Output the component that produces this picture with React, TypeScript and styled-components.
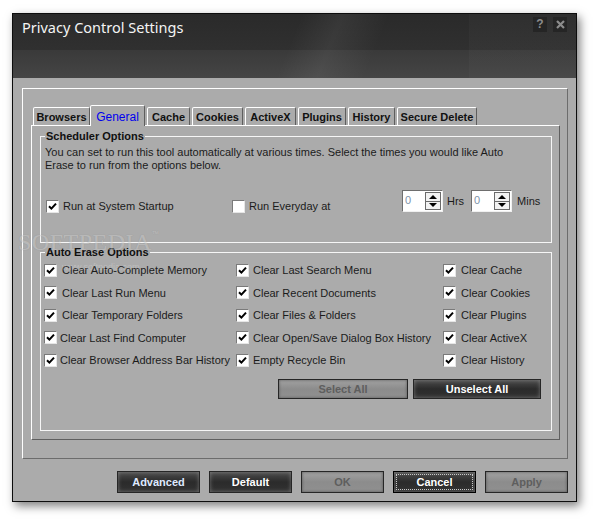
import styled, { createGlobalStyle } from "styled-components";

const GlobalStyle = createGlobalStyle`
  html, body {
    margin: 0;
    padding: 0;
    background: #ffffff;
  }
  body {
    font-family: "Liberation Sans", Arial, sans-serif;
    font-size: 11px;
    color: #1b1b1b;
  }
  * {
    box-sizing: border-box;
  }
`;

const Page = styled.div`
  position: relative;
  width: 596px;
  height: 522px;
  padding: 13px 0 0 12px;
  overflow: hidden;
`;

const Window = styled.div`
  width: 565px;
  height: 489px;
  border: 1px solid #0d0d0d;
  background: #ababab;
  box-shadow: 3px 4px 9px rgba(0, 0, 0, 0.5);
  display: flex;
  flex-direction: column;
`;

const TitleBar = styled.div`
  flex: none;
  height: 64px;
  display: flex;
  align-items: flex-start;
  justify-content: space-between;
  padding: 3px 9px 0 9px;
  background:
    linear-gradient(90deg, transparent 0 81%, rgba(255, 255, 255, 0.025) 81% 100%),
    linear-gradient(112deg, transparent 0 49%, rgba(255, 255, 255, 0.06) 56%, transparent 64%),
    linear-gradient(180deg, #2a2a2a 0, #303030 56%, #3a3a3a 57%, #454545 100%);
`;

const Title = styled.div`
  font-family: "Noto Sans", "Liberation Sans", sans-serif;
  font-size: 14.5px;
  line-height: 20px;
  color: #f4f4f4;
`;

const TitleButtons = styled.div`
  display: flex;
  gap: 6px;
`;

const TitleButton = styled.div`
  width: 14px;
  height: 15px;
  background: #252525;
  color: #8c8c8c;
  font-weight: bold;
  font-size: 12px;
  line-height: 15px;
  text-align: center;
  display: flex;
  align-items: center;
  justify-content: center;
`;

const Body = styled.div`
  flex: 1;
  display: flex;
  flex-direction: column;
  padding: 10px 8px 8px 9px;
`;

const Panel = styled.div`
  flex: 1;
  display: flex;
  flex-direction: column;
  border: 1px solid;
  border-color: #ffffff #6c6c6c #6c6c6c #ffffff;
  padding: 16px 7px 18px 8px;
`;

const TabStrip = styled.div`
  position: relative;
  z-index: 1;
  height: 20px;
  display: flex;
  align-items: flex-end;
  padding-left: 2px;
`;

const Tab = styled.div<{ $w: number; $gap: number; $active?: boolean }>`
  width: ${(p) => p.$w}px;
  margin-left: ${(p) => p.$gap}px;
  height: ${(p) => (p.$active ? 21 : 18)}px;
  margin-bottom: ${(p) => (p.$active ? -1 : 0)}px;
  border: 1px solid;
  border-bottom: 0;
  border-color: #ffffff #5e5e5e transparent #ffffff;
  border-radius: 2px 2px 0 0;
  background: #ababab;
  display: flex;
  align-items: center;
  justify-content: center;
  font-weight: ${(p) => (p.$active ? "normal" : "bold")};
  font-size: ${(p) => (p.$active ? 12 : 11)}px;
  color: ${(p) => (p.$active ? "#0000ee" : "#111111")};
  padding-top: ${(p) => (p.$active ? 1 : 0)}px;
`;

const TabPanel = styled.div`
  flex: 1;
  display: flex;
  flex-direction: column;
  border: 1px solid;
  border-color: #ffffff #5f5f5f #5f5f5f #ffffff;
  padding: 4px 7px 0 8px;
`;

const Group = styled.fieldset<{ $h: number; $top?: number }>`
  height: ${(p) => p.$h}px;
  margin: ${(p) => p.$top ?? 0}px 0 0 0;
  padding: 0 4px 0 3px;
  border: 1px solid #f6f6f6;
  min-width: 0;
`;

const Legend = styled.legend`
  padding: 0 1px;
  margin-left: 1px;
  font-weight: bold;
  font-size: 11px;
  line-height: 13px;
  color: #111111;
`;

const Description = styled.p`
  margin: 3px 0 0 1px;
  line-height: 13px;
`;

const ScheduleRow = styled.div`
  margin-top: 19px;
  height: 22px;
  display: flex;
  align-items: flex-end;
  padding-left: 2px;
`;

const CheckItem = styled.label<{ $w?: number; $gap?: number }>`
  display: flex;
  align-items: center;
  gap: ${(p) => p.$gap ?? 5}px;
  width: ${(p) => (p.$w ? `${p.$w}px` : "auto")};
  height: 14px;
  white-space: nowrap;
`;

const Box = styled.span`
  flex: none;
  width: 13px;
  height: 13px;
  background: #ffffff;
  border: 1px solid;
  border-color: #7a7a7a #e6e6e6 #e6e6e6 #7a7a7a;
  display: flex;
  align-items: center;
  justify-content: center;
`;

const TimeGroup = styled.div`
  display: flex;
  align-items: center;
  height: 22px;
  margin-bottom: 1px;
`;

const Spinner = styled.div`
  width: 41px;
  height: 22px;
  display: flex;
  background: #ffffff;
  border: 1px solid;
  border-color: #6e6e6e #f0f0f0 #f0f0f0 #6e6e6e;
`;

const SpinValue = styled.span`
  flex: 1;
  padding-left: 2px;
  line-height: 18px;
  color: #8092aa;
`;

const SpinButtons = styled.div`
  width: 16px;
  margin: 1px 1px 1px 0;
  display: flex;
  flex-direction: column;
  border: 1px solid #6a6a6a;
`;

const SpinHalf = styled.div<{ $down?: boolean }>`
  flex: 1;
  display: flex;
  align-items: center;
  justify-content: center;
  background: #f2f2f2;
  border-top: ${(p) => (p.$down ? "1px solid #6a6a6a" : "0")};
`;

const Arrow = styled.span<{ $down?: boolean }>`
  width: 0;
  height: 0;
  border-left: 4px solid transparent;
  border-right: 4px solid transparent;
  ${(p) => (p.$down ? "border-top: 4px solid #000;" : "border-bottom: 4px solid #000;")}
`;

const Unit = styled.span<{ $l: number; $r: number }>`
  margin: 0 ${(p) => p.$r}px 0 ${(p) => p.$l}px;
`;

const EraseGrid = styled.div`
  margin-top: 4px;
  display: grid;
  grid-template-columns: 192px 207px 1fr;
  grid-auto-rows: 14px;
  row-gap: 8.6px;
`;

const ActionRow = styled.div`
  margin-top: 12px;
  display: flex;
  justify-content: flex-end;
  gap: 5px;
  padding-right: 6px;
`;

const Button = styled.button<{ $light?: boolean; $w: number; $h: number; $focus?: boolean }>`
  width: ${(p) => p.$w}px;
  height: ${(p) => p.$h}px;
  padding: 0;
  font-family: "Liberation Sans", Arial, sans-serif;
  font-size: 11px;
  font-weight: bold;
  border: 1px solid ${(p) => (p.$focus ? "#000" : "#262626")};
  color: ${(p) => (p.$light ? "#5e5e5e" : "#ffffff")};
  background: ${(p) =>
    p.$light
      ? "linear-gradient(180deg, #a2a2a2 0, #8c8c8c 50%, #909090 100%)"
      : "linear-gradient(180deg, #4c4c4c 0, #2b2b2b 50%, #323232 100%)"};
  box-shadow: ${(p) =>
    p.$light
      ? "inset 0 0 3px rgba(60, 60, 60, 0.7)"
      : "inset 0 0 4px rgba(170, 170, 170, 0.55)"};
  outline: ${(p) => (p.$focus ? "1px dotted #c8c8c8" : "none")};
  outline-offset: -4px;
`;

const Footer = styled.div`
  margin-top: 12px;
  display: flex;
  justify-content: flex-end;
  gap: 9px;
`;

const Watermark = styled.div`
  position: absolute;
  left: 18px;
  top: 229px;
  font-family: "Liberation Serif", serif;
  font-size: 24px;
  letter-spacing: 0.5px;
  color: rgba(255, 255, 255, 0.32);
  text-shadow: 0 0 1px rgba(90, 90, 90, 0.25);
  pointer-events: none;

  sup {
    font-family: "Liberation Sans", sans-serif;
    font-size: 7px;
    vertical-align: 14px;
  }
`;

const WatermarkUrl = styled.div`
  position: absolute;
  left: 62px;
  top: 262px;
  font-size: 9px;
  color: rgba(255, 255, 255, 0.22);
  pointer-events: none;
`;

const Check = () => (
  <svg width="9" height="9" viewBox="0 0 9 9">
    <path d="M1 4.2 L3.4 6.6 L8 1.6" fill="none" stroke="#000" strokeWidth="2" />
  </svg>
);

const CheckBox = ({
  label,
  checked = true,
  w,
  gap,
}: {
  label: string;
  checked?: boolean;
  w?: number;
  gap?: number;
}) => (
  <CheckItem $w={w} $gap={gap}>
    <Box>{checked && <Check />}</Box>
    {label}
  </CheckItem>
);

const TimeSpinner = () => (
  <Spinner>
    <SpinValue>0</SpinValue>
    <SpinButtons>
      <SpinHalf>
        <Arrow />
      </SpinHalf>
      <SpinHalf $down>
        <Arrow $down />
      </SpinHalf>
    </SpinButtons>
  </Spinner>
);

const tabs = [
  { name: "Browsers", w: 57, gap: 0 },
  { name: "General", w: 55, gap: 0, active: true },
  { name: "Cache", w: 43, gap: 2 },
  { name: "Cookies", w: 51, gap: 2 },
  { name: "ActiveX", w: 51, gap: 2 },
  { name: "Plugins", w: 48, gap: 2 },
  { name: "History", w: 47, gap: 2 },
  { name: "Secure Delete", w: 80, gap: 2 },
];

// по строкам: три колонки
const eraseOptions = [
  ["Clear Auto-Complete Memory", "Clear Last Search Menu", "Clear Cache"],
  ["Clear Last Run Menu", "Clear Recent Documents", "Clear Cookies"],
  ["Clear Temporary Folders", "Clear Files & Folders", "Clear Plugins"],
  ["Clear Last Find Computer", "Clear Open/Save Dialog Box History", "Clear ActiveX"],
  ["Clear Browser Address Bar History", "Empty Recycle Bin", "Clear History"],
];

const gapFor = (row: number, col: number) => {
  if (col === 0) return row >= 3 ? 3 : 5;
  if (col === 1) return 4;
  return 5;
};

export default function App() {
  return (
    <>
      <GlobalStyle />
      <Page>
        <Window>
          <TitleBar>
            <Title>Privacy Control Settings</Title>
            <TitleButtons>
              <TitleButton>?</TitleButton>
              <TitleButton>
                <svg width="9" height="9" viewBox="0 0 9 9">
                  <path d="M1 1 L8 8 M8 1 L1 8" stroke="#8c8c8c" strokeWidth="2.2" />
                </svg>
              </TitleButton>
            </TitleButtons>
          </TitleBar>
          <Body>
            <Panel>
              <TabStrip>
                {tabs.map((t) => (
                  <Tab key={t.name} $w={t.w} $gap={t.gap} $active={t.active}>
                    {t.name}
                  </Tab>
                ))}
              </TabStrip>
              <TabPanel>
                <Group $h={113}>
                  <Legend>Scheduler Options</Legend>
                  <Description>
                    You can set to run this tool automatically at various times. Select the times you would like Auto
                    <br />
                    Erase to run from the options below.
                  </Description>
                  <ScheduleRow>
                    <CheckBox label="Run at System Startup" w={186} gap={4} />
                    <CheckBox label="Run Everyday at" checked={false} w={170} gap={4} />
                    <TimeGroup>
                      <TimeSpinner />
                      <Unit $l={4} $r={7}>Hrs</Unit>
                      <TimeSpinner />
                      <Unit $l={5} $r={0}>Mins</Unit>
                    </TimeGroup>
                  </ScheduleRow>
                </Group>
                <Group $h={185} $top={3}>
                  <Legend>Auto Erase Options</Legend>
                  <EraseGrid>
                    {eraseOptions.map((row, i) =>
                      row.map((label, j) => (
                        <CheckBox key={label} label={label} gap={gapFor(i, j)} />
                      ))
                    )}
                  </EraseGrid>
                  <ActionRow>
                    <Button $light $w={130} $h={20}>Select All</Button>
                    <Button $w={128} $h={20}>Unselect All</Button>
                  </ActionRow>
                </Group>
              </TabPanel>
            </Panel>
            <Footer>
              <Button $w={83} $h={22} style={{ color: "#dfe9ff" }}>Advanced</Button>
              <Button $w={83} $h={22}>Default</Button>
              <Button $light $w={83} $h={22}>OK</Button>
              <Button $focus $w={83} $h={22}>Cancel</Button>
              <Button $light $w={83} $h={22}>Apply</Button>
            </Footer>
          </Body>
        </Window>
        <Watermark>
          SOFTPEDIA<sup>™</sup>
        </Watermark>
        <WatermarkUrl>www.softpedia.com</WatermarkUrl>
      </Page>
    </>
  );
}
